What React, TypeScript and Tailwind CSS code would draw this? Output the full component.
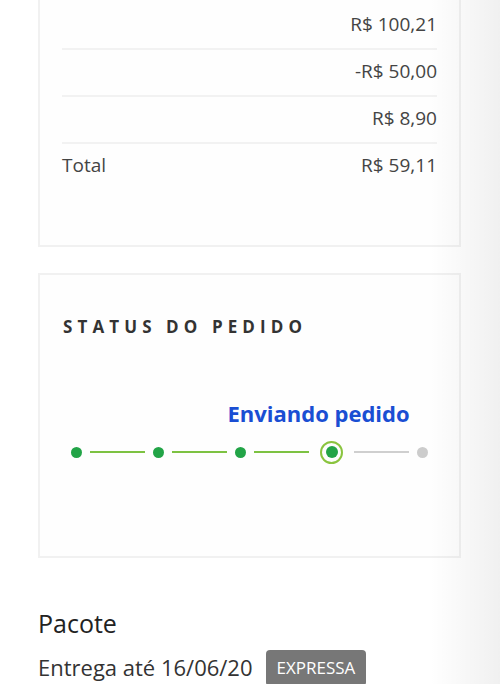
import React from "react";

const linhas = [
  { id: 1, label: "", valor: "R$ 100,21" },
  { id: 2, label: "", valor: "-R$ 50,00" },
  { id: 3, label: "", valor: "R$ 8,90" },
];

const passos = ["feito", "feito", "feito", "atual", "pendente"] as const;

const Resumo: React.FC = () => (
  <div className="border-2 border-t-0 border-[#f1f1f1] bg-[#fefefe] px-[22px] pt-[3px] pb-[59px]">
    {linhas.map((l) => (
      <div
        key={l.id}
        className="flex h-[47px] items-center justify-between border-b-2 border-[#f2f2f2] pb-[2px] text-[19px] text-[#444]"
      >
        <span>{l.label}</span>
        <span>{l.valor}</span>
      </div>
    ))}
    <div className="flex h-[42px] items-center justify-between text-[19px] text-[#444]">
      <span>Total</span>
      <span>R$ 59,11</span>
    </div>
  </div>
);

const StatusPedido: React.FC = () => (
  <div className="mt-[26px] border-2 border-[#f1f1f1] bg-[#fefefe] px-[23px] pt-[39px] pb-[92px]">
    <h3 className="text-[17px] font-bold tracking-[5.1px] text-[#333]">
      STATUS DO PEDIDO
    </h3>
    <div className="mt-[101px] flex items-center pl-[8px]">
      {passos.map((p, i) => (
        <React.Fragment key={i}>
          {p === "feito" && (
            <div className="h-[11px] w-[11px] shrink-0 rounded-full bg-[#22a447]" />
          )}
          {p === "atual" && (
            <div className="relative flex h-[23px] w-[23px] shrink-0 items-center justify-center rounded-full border-2 border-[#8ac43f]">
              <div className="h-[12px] w-[12px] rounded-full bg-[#22a447]" />
              <span className="absolute bottom-[32px] left-1/2 ml-[-104px] whitespace-nowrap text-[22px] font-bold text-[#1a4ed3]">
                Enviando pedido
              </span>
            </div>
          )}
          {p === "pendente" && (
            <div className="h-[11px] w-[11px] shrink-0 rounded-full bg-[#cccccc]" />
          )}
          {i < passos.length - 1 && (
            <div
              className={`mx-[8px] h-[2px] w-[55px] ${
                i < 3 ? "bg-[#7dc242]" : "bg-[#cfcfcf]"
              } ${i === 2 ? "mr-[11px]" : ""} ${i === 3 ? "ml-[11px]" : ""}`}
            />
          )}
        </React.Fragment>
      ))}
    </div>
  </div>
);

const Pacote: React.FC = () => (
  <div className="mt-[49px]">
    <h2 className="text-[25px] leading-[32px] text-[#222]">Pacote</h2>
    <div className="mt-[11px] flex items-center gap-[13px]">
      <span className="text-[22px] leading-[33px] text-[#333]">Entrega até 16/06/20</span>
      <span className="rounded-[4px] bg-[#777777] px-[11px] py-[7px] text-[17px] leading-[22px] text-white">
        EXPRESSA
      </span>
    </div>
  </div>
);

export default function App() {
  return (
    <div
      className="relative h-[684px] w-full overflow-hidden bg-white"
      style={{ fontFamily: '"Open Sans", "Noto Sans", sans-serif' }}
    >
      <div className="pr-[39px] pl-[38px]">
        <Resumo />
        <StatusPedido />
        <Pacote />
      </div>
      <div className="pointer-events-none absolute top-0 right-0 h-full w-[70px] bg-linear-to-r from-transparent to-[rgba(0,0,0,0.06)]" />
    </div>
  );
}
